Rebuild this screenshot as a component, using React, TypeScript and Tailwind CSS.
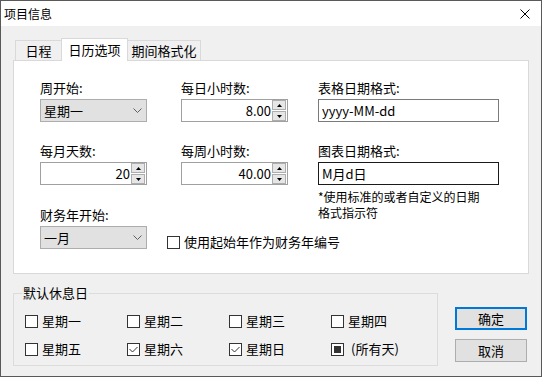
import React from 'react'

type CheckState = 'off' | 'on' | 'mixed'

function Box({ state = 'off' }: { state?: CheckState }) {
  return (
    <span className="w-[13px] h-[13px] shrink-0 border border-[#333333] bg-white flex items-center justify-center">
      {state === 'on' && (
        <svg width="11" height="11" viewBox="0 0 11 11">
          <path d="M1.5 5 L4.5 8 L9.5 3" fill="none" stroke="#333333" strokeWidth="1" />
        </svg>
      )}
      {state === 'mixed' && <span className="w-[7px] h-[7px] bg-[#333333]" />}
    </span>
  )
}

function CheckItem({ label, state }: { label: string; state?: CheckState }) {
  return (
    <div className="flex items-center gap-[4px] h-[14px]">
      <Box state={state} />
      <span className="text-[13px] leading-[18px] whitespace-nowrap">{label}</span>
    </div>
  )
}

function Label({ children }: { children: React.ReactNode }) {
  return <div className="text-[13px] leading-[18px] h-[18px] mb-[2px] whitespace-nowrap">{children}</div>
}

function Combo({ value }: { value: string }) {
  return (
    <div className="w-[107px] h-[23px] shrink-0 border border-[#adadad] bg-[#e1e1e1] flex items-center justify-between pl-[3px] pr-[4px]">
      <span className="text-[13px] leading-[18px]">{value}</span>
      <svg width="9" height="5" viewBox="0 0 9 5">
        <path d="M0.5 0.5 L4.5 4.5 L8.5 0.5" fill="none" stroke="#606060" strokeWidth="1" />
      </svg>
    </div>
  )
}

function Spin({ value }: { value: string }) {
  return (
    <div className="w-[107px] h-[23px] shrink-0 border border-[#a0a0a0] bg-white flex">
      <span className="flex-1 text-right pr-[1px] text-[13px] leading-[21px]">{value}</span>
      <div className="w-[14px] mr-[1px] flex flex-col gap-[1px]">
        <div className="h-[10px] border border-[#adadad] bg-[#e6e6e6] flex items-center justify-center">
          <svg width="5" height="3" viewBox="0 0 5 3">
            <path d="M0 3 L2.5 0 L5 3 Z" fill="#000" />
          </svg>
        </div>
        <div className="h-[10px] border border-[#adadad] bg-[#e6e6e6] flex items-center justify-center">
          <svg width="5" height="3" viewBox="0 0 5 3">
            <path d="M0 0 L2.5 3 L5 0 Z" fill="#000" />
          </svg>
        </div>
      </div>
    </div>
  )
}

function TextBox({ value, dark }: { value: string; dark?: boolean }) {
  return (
    <div
      className={
        dark
          ? 'w-[181px] h-[23px] border border-[#1a1a1a] bg-white pl-[3px] flex items-center'
          : 'w-[181px] h-[23px] border border-[#7a7a7a] bg-white pl-[3px] flex items-center'
      }
    >
      <span className="text-[13px] leading-[18px]">{value}</span>
    </div>
  )
}

export default function App() {
  return (
    <div className="w-[542px] h-[377px] border border-[#595959] bg-[#f0f0f0] flex flex-col text-black overflow-hidden [font-family:'Noto_Sans_CJK_SC',sans-serif]">
      {/* title bar */}
      <div className="h-[25px] shrink-0 bg-white flex items-center justify-between pl-[3px] pr-[11px]">
        <span className="text-[12px] leading-[16px]">项目信息</span>
        <svg width="10" height="10" viewBox="0 0 10 10">
          <path d="M0.5 0.5 L9.5 9.5 M9.5 0.5 L0.5 9.5" stroke="#000" strokeWidth="1" />
        </svg>
      </div>

      <div className="flex-1 px-[12px] pt-[12px]">
        {/* tabs */}
        <div className="relative z-10 flex items-end h-[23px] ml-[2px]">
          <div className="w-[46px] h-[20px] mb-[1px] border border-r-0 border-b-0 border-[#d9d9d9] flex items-center justify-center text-[13px] leading-[18px]">
            日程
          </div>
          <div className="w-[67px] h-[23px] border border-b-0 border-[#d9d9d9] bg-white flex items-center justify-center text-[13px] leading-[18px] pb-[1px]">
            日历选项
          </div>
          <div className="w-[73px] h-[20px] mb-[1px] border border-l-0 border-b-0 border-[#d9d9d9] flex items-center justify-center text-[13px] leading-[18px]">
            期间格式化
          </div>
        </div>

        {/* tab panel */}
        <div className="-mt-px w-[516px] h-[214px] border border-[#d9d9d9] bg-white pt-[18px] pl-[26px] flex">
          <div className="w-[278px] flex flex-col">
            <div className="flex">
              <div className="w-[141px]">
                <Label>周开始:</Label>
                <Combo value="星期一" />
              </div>
              <div>
                <Label>每日小时数:</Label>
                <Spin value="8.00" />
              </div>
            </div>
            <div className="flex mt-[20px]">
              <div className="w-[141px]">
                <Label>每月天数:</Label>
                <Spin value="20" />
              </div>
              <div>
                <Label>每周小时数:</Label>
                <Spin value="40.00" />
              </div>
            </div>
            <div className="mt-[21px]">
              <Label>财务年开始:</Label>
              <div className="flex items-start">
                <Combo value="一月" />
                <div className="ml-[20px] mt-[9px]">
                  <CheckItem label="使用起始年作为财务年编号" />
                </div>
              </div>
            </div>
          </div>

          <div className="flex flex-col">
            <Label>表格日期格式:</Label>
            <TextBox value="yyyy-MM-dd" />
            <div className="mt-[20px]">
              <Label>图表日期格式:</Label>
            </div>
            <TextBox value="M月d日" dark />
            <p className="mt-[4px] text-[12px] leading-[16px]">
              *使用标准的或者自定义的日期
              <br />
              格式指示符
            </p>
          </div>
        </div>

        {/* bottom area */}
        <div className="flex mt-[10px]">
          <fieldset className="w-[425px] border border-[#dcdcdc] pl-[8px] pt-[12px] pb-[9px]">
            <legend className="px-[1px] text-[13px] leading-[18px]">默认休息日</legend>
            <div className="ml-[3px] grid grid-cols-[102px_102px_102px_102px] gap-y-[14px]">
              <CheckItem label="星期一" />
              <CheckItem label="星期二" />
              <CheckItem label="星期三" />
              <CheckItem label="星期四" />
              <CheckItem label="星期五" />
              <CheckItem label="星期六" state="on" />
              <CheckItem label="星期日" state="on" />
              <div className="flex items-center h-[14px]">
                <Box state="mixed" />
                <span className="ml-[7px] text-[13px] leading-[18px] whitespace-nowrap">(所有天)</span>
              </div>
            </div>
          </fieldset>

          <div className="ml-[17px] mt-[23px] flex flex-col">
            <button className="w-[72px] h-[23px] border-2 border-[#0078d7] bg-[#e1e1e1] text-[13px] leading-[18px] flex items-center justify-center">
              确定
            </button>
            <button className="mt-[9px] w-[72px] h-[23px] border border-[#adadad] bg-[#e1e1e1] text-[13px] leading-[18px] flex items-center justify-center">
              取消
            </button>
          </div>
        </div>
      </div>
    </div>
  )
}
